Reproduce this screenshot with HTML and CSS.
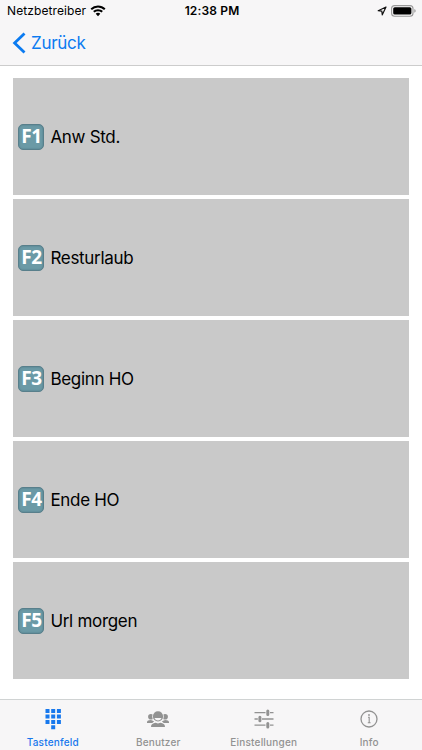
FILE: index.html
```html
<!DOCTYPE html>
<html lang="de">
<head>
<meta charset="utf-8">
<title>Tastenfeld</title>
<link rel="stylesheet" href="styles.css">
</head>
<body>
<header class="top">
  <div class="status">
    <div class="carrier"><span>Netzbetreiber</span>
      <svg width="16" height="12" viewBox="0 0 16 12"><path d="M8 .4c2.900 0 5.500 1.100 7.500 3l-1.400 1.500A8.800 8.800 0 0 0 8 2.400a8.800 8.800 0 0 0-6.100 2.500L.5 3.400A10.900 10.900 0 0 1 8 .4zM8 4.200c1.900 0 3.600.7 4.900 1.900l-1.400 1.500A5.100 5.100 0 0 0 8 6.200a5.100 5.100 0 0 0-3.500 1.400L3.100 6.100A7.200 7.200 0 0 1 8 4.200zM8 7.800c.9 0 1.700.3 2.300.9L8 11.200 5.700 8.700c.6-.6 1.400-.9 2.300-.9z"/></svg>
    </div>
    <div class="clock">12:38 PM</div>
    <div class="power">
      <svg width="10" height="10" viewBox="0 0 10 10"><path d="M9 1 1.200 4.700l3.600.5.500 3.600z" fill="none" stroke="#111" stroke-width="1.200" stroke-linejoin="round"/></svg>
      <svg width="26" height="12" viewBox="0 0 26 12"><rect x=".6" y=".6" width="21.400" height="10.600" rx="3" fill="none" stroke="#999" stroke-width="1.100"/><rect x="2.200" y="2.200" width="18.200" height="7.400" rx="1.600"/><path d="M23.300 4.100q1.400.6 1.400 1.800t-1.400 1.800z" fill="#999"/></svg>
    </div>
  </div>
  <nav class="back">
    <svg width="14" height="22" viewBox="0 0 14 22"><path d="M12.500 1.400 2.600 11l9.900 9.600" fill="none" stroke="currentColor" stroke-width="2.800"/></svg>
    <span>Zurück</span>
  </nav>
</header>
<main class="keys">
  <div class="key"><span class="badge">F1</span><span class="label">Anw Std.</span></div>
  <div class="key"><span class="badge">F2</span><span class="label">Resturlaub</span></div>
  <div class="key"><span class="badge">F3</span><span class="label">Beginn HO</span></div>
  <div class="key"><span class="badge">F4</span><span class="label">Ende HO</span></div>
  <div class="key"><span class="badge">F5</span><span class="label">Url morgen</span></div>
</main>
<footer class="tabs">
  <div class="tab active">
    <svg width="24" height="24" viewBox="0 0 24 24" fill="currentColor"><path d="M4.500 2h4v4h-4zM10.200 2h4v4h-4zM15.900 2h4v4h-4zM4.500 7.500h4v4h-4zM10.200 7.500h4v4h-4zM15.900 7.500h4v4h-4zM4.500 12.900h4v4h-4zM10.200 12.900h4v4h-4zM15.900 12.900h4v4h-4zM10.200 18.200h4v4h-4z"/></svg>
    <span>Tastenfeld</span>
  </div>
  <div class="tab">
    <svg width="24" height="24" viewBox="0 0 24 24" fill="currentColor"><circle cx="4.900" cy="9.800" r="2.800"/><circle cx="19.100" cy="9.800" r="2.800"/><path d="M1 15.300c0-1.800 1.600-2.300 3.900-2.400l3.200 1.300-1.800 1.700H1zM23 15.300c0-1.800-1.600-2.300-3.900-2.400l-3.200 1.300 1.800 1.700H23z"/><circle cx="12" cy="9.400" r="5.800" fill="#f7f6f7"/><circle cx="12" cy="9.400" r="5.100"/><path d="M8.500 10.900q3.500.4 7 0c-.4 1.500-1.800 2.500-3.500 2.500s-3.100-1-3.500-2.500z" fill="#f7f6f7"/><path d="M5 19.900c0-2.800 2-3.500 4.600-4.100l2.400.6 2.400-.6c2.600.6 4.600 1.300 4.600 4.100z"/></svg>
    <span>Benutzer</span>
  </div>
  <div class="tab">
    <svg width="24" height="24" viewBox="0 0 24 24" fill="none" stroke="currentColor"><path d="M2.500 5.700h11M18 5.700h3.500M2.500 12h3.300M10 12h11.500M2.500 18.200h11M18 18.200h3.500" stroke-width="1.300"/><path d="M15.800 3.900v3.600M7.900 10.200v3.600M15.800 16.400V20" stroke-width="3" stroke-linecap="round"/></svg>
    <span>Einstellungen</span>
  </div>
  <div class="tab">
    <svg width="24" height="24" viewBox="0 0 24 24" fill="none" stroke="currentColor"><circle cx="12" cy="12" r="8" stroke-width="1.300"/><path d="M11 10.300h1.200v5.500M10.800 15.800h2.800" stroke-width="1.100"/><circle cx="12" cy="8" r=".9" fill="currentColor" stroke="none"/></svg>
    <span>Info</span>
  </div>
</footer>
</body>
</html>
```
FILE: styles.css
```css
* { box-sizing: border-box; }
body {
  margin: 0;
  width: 422px;
  height: 750px;
  overflow: hidden;
  display: flex;
  flex-direction: column;
  background: #fff;
  color: #000;
  font-family: Inter, "Liberation Sans", sans-serif;
}
svg { display: block; flex: none; }
span { white-space: nowrap; }
.top { height: 66px; flex: none; background: #f7f6f7; border-bottom: 1px solid #ccc; }
.status {
  height: 21px;
  display: grid;
  grid-template-columns: 1fr auto 1fr;
  align-items: center;
  padding: 0 5px 0 7px;
}
.carrier { display: flex; align-items: center; gap: 4px; font-size: 12px; letter-spacing: 0.1px; }
.clock { font-size: 12px; font-weight: 600; letter-spacing: 0.15px; }
.power { display: flex; align-items: center; justify-content: flex-end; gap: 4px; }
.back {
  height: 43px;
  display: flex;
  align-items: center;
  gap: 5px;
  padding-left: 12px;
  color: #0b7bf1;
  font-size: 17px;
  letter-spacing: -0.3px;
}
.keys {
  flex: 1;
  display: grid;
  grid-template-rows: repeat(5, 1fr);
  gap: 4px;
  padding: 12px 13px 19.500px 12.600px;
}
.key { display: flex; align-items: center; gap: 6px; padding-left: 5.800px; background: #c9c9c9; }
.badge {
  width: 26px;
  height: 26px;
  border-radius: 5px;
  background: #6b9aa6;
  border: 1px solid #587f8b;
  box-shadow: inset 0 0 2px #4f7884;
  color: #fff;
  font: 700 19px/23px "Noto Sans", sans-serif;
  text-align: center;
  letter-spacing: -0.5px;
}
.label { font-size: 17px; letter-spacing: -0.3px; }
.tabs {
  height: 51px;
  flex: none;
  display: grid;
  grid-template-columns: repeat(4, 1fr);
  background: #f7f6f7;
  border-top: 1px solid #d0d3d3;
}
.tab {
  display: flex;
  flex-direction: column;
  align-items: center;
  padding-top: 7px;
  color: #929292;
  font-size: 10px;
  font-weight: 500;
  line-height: 12px;
  letter-spacing: 0.2px;
}
.tab span { margin-top: 5px; }
.active { color: #1778ed; }
```
